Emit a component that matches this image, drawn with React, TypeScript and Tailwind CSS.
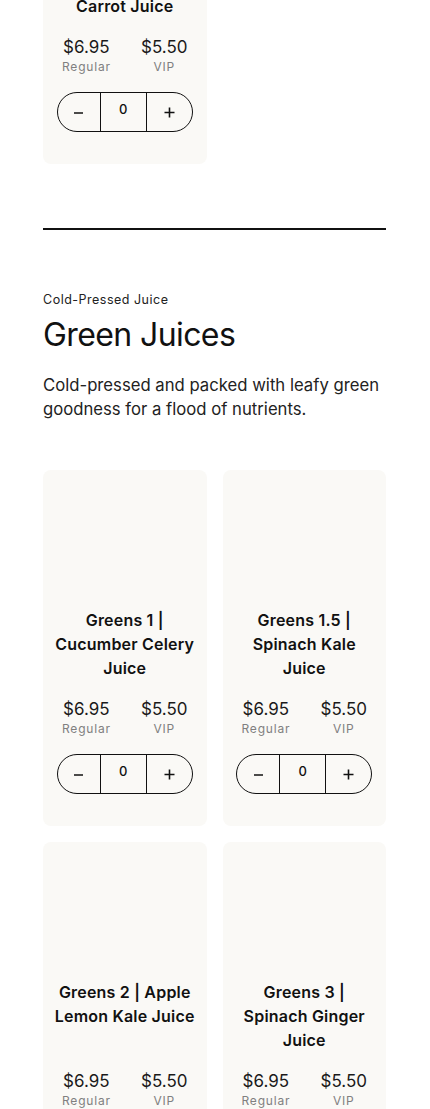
import React from "react";

function Minus() {
  return (
    <svg width="11" height="11" viewBox="0 0 11 11" fill="none">
      <path d="M1 6h9" stroke="#111" strokeWidth="1.6" />
    </svg>
  );
}
function Plus() {
  return (
    <svg width="11" height="11" viewBox="0 0 11 11" fill="none">
      <path d="M0.5 5.5h10M5.5 0.5v10" stroke="#111" strokeWidth="1.6" />
    </svg>
  );
}

function Price({ value, label }: { value: string; label: string }) {
  return (
    <div className="flex flex-col items-center">
      <span className="text-[17px] leading-[22px] text-[#1a1a1a]">{value}</span>
      <span className="mt-[1px] text-[12px] leading-4 tracking-[0.8px] text-[#808080]">{label}</span>
    </div>
  );
}

function Stepper() {
  return (
    <div className="mt-[17px] flex h-10 w-[136px] overflow-hidden rounded-full border-[1.5px] border-[#111]">
      <button className="flex w-[43px] items-center justify-center border-r-[1.5px] border-[#111]">
        <Minus />
      </button>
      <div className="flex w-[46px] items-center justify-center border-r-[1.5px] border-[#111] pb-[5px] text-[13px] font-medium text-[#111]">
        0
      </div>
      <button className="flex flex-1 items-center justify-center">
        <Plus />
      </button>
    </div>
  );
}

function Card({ lines }: { lines: string[] }) {
  return (
    <div className="flex flex-col items-center rounded-lg bg-[#faf9f6] px-2 pt-[138px] pb-8">
      <h3 className="flex flex-col items-center text-center text-[16px] leading-6 font-semibold tracking-[0.2px] text-[#111]">
        {lines.map((l) => (
          <span key={l} className="whitespace-nowrap">
            {l}
          </span>
        ))}
      </h3>
      <div className="mt-auto flex w-full justify-between px-[11px] pt-[18px]">
        <Price value="$6.95" label="Regular" />
        <Price value="$5.50" label="VIP" />
      </div>
      <Stepper />
    </div>
  );
}

export default function App() {
  return (
    <div className="min-h-[1109px] overflow-hidden bg-white font-[Inter,'Liberation_Sans',sans-serif] text-[#111]">
      <div className="ml-[43px] w-[343px]">
        <div className="-mt-[144px] grid grid-cols-2 gap-4">
          <Card lines={["Carrot Juice"]} />
        </div>

        <div className="mt-16 h-[2px] bg-[#111]" />

        <section>
          <p className="mt-[62px] text-[12.5px] leading-4 tracking-[0.5px] text-[#222]">Cold-Pressed Juice</p>
          <h2 className="mt-[7px] text-[32px] leading-10 font-normal tracking-[-0.6px] text-[#111]">Green Juices</h2>
          <p className="mt-[18px] text-[16.7px] leading-6 text-[#222]">
            <span className="block whitespace-nowrap">Cold-pressed and packed with leafy green</span>
            <span className="block whitespace-nowrap">goodness for a flood of nutrients.</span>
          </p>

          <div className="mt-[49px] grid grid-cols-2 gap-4">
            <Card lines={["Greens 1 |", "Cucumber Celery", "Juice"]} />
            <Card lines={["Greens 1.5 |", "Spinach Kale", "Juice"]} />
            <Card lines={["Greens 2 | Apple", "Lemon Kale Juice"]} />
            <Card lines={["Greens 3 |", "Spinach Ginger", "Juice"]} />
          </div>
        </section>
      </div>
    </div>
  );
}
